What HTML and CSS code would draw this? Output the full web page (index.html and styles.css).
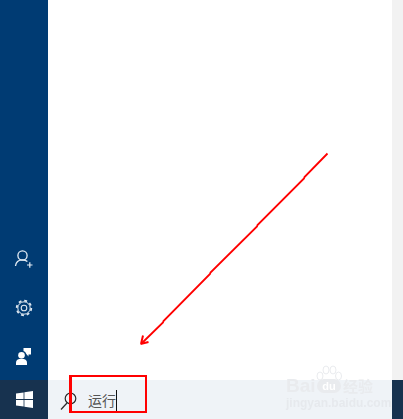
FILE: index.html
```html
<!DOCTYPE html>
<html lang="zh-CN">
<head>
  <meta charset="UTF-8">
  <meta name="viewport" content="width=device-width, initial-scale=1.0">
  <title>运行</title>
  <link rel="stylesheet" href="styles.css">
</head>
<body>
  <div class="screen">

    <!-- Start menu -->
    <div class="start-menu">
      <div class="rail">
        <svg class="rail-icon" width="20" height="20" viewBox="0 0 20 20" fill="none" stroke="#e6eef6" stroke-width="1.3">
          <circle cx="8.5" cy="6.5" r="4.6"/>
          <path d="M1.5 17c.4-4 3-6.2 7-6.2 2 0 3.700.6 4.900 1.700"/>
          <path d="M13 16h5.500M15.800 13.300v5.400" stroke-width="1.200"/>
        </svg>
        <svg class="rail-icon" width="18" height="18" viewBox="0 0 18 18" fill="none" stroke="#dfe8f1">
          <circle cx="9" cy="9" r="2.800" stroke-width="1.100"/>
          <circle cx="9" cy="9" r="6.200" stroke-width="1"/>
          <circle cx="9" cy="9" r="7.300" stroke-width="1.800" stroke-dasharray="2.900 2.830"/>
        </svg>
        <svg class="rail-icon" width="16" height="18" viewBox="0 0 16 18" fill="#fff">
          <circle cx="5.500" cy="8.200" r="3.300"/>
          <path d="M0 18v-2.500c0-2.200 1.800-3.700 5.500-3.700s5.500 1.500 5.500 3.700V18z"/>
          <path d="M7.500 1H15v6.500h-2.500v2l-2.200-2.500c-.5-1.600-1.600-2.500-2.800-3z"/>
        </svg>
      </div>
      <div class="menu-body"></div>
      <div class="menu-edge"></div>
    </div>

    <!-- Taskbar -->
    <div class="taskbar">
      <div class="start-btn">
        <svg width="17" height="17" viewBox="0 0 17 17" fill="#fff">
          <path d="M0 2.500 7.600 1.400v6.700H0z"/>
          <path d="M8.400 1.300 17 0v8.100H8.400z"/>
          <path d="M0 8.900h7.600v6.700L0 14.500z"/>
          <path d="M8.400 8.900H17V17l-8.600-1.300z"/>
        </svg>
      </div>
      <div class="search-box">
        <svg class="search-icon" width="17" height="18" viewBox="0 0 17 18" fill="none" stroke="#2b2b2b" stroke-width="1.200">
          <circle cx="10.500" cy="6.500" r="5.300"/>
          <path d="M7 11 1 17.500"/>
        </svg>
        <span class="search-text">运行</span>
        <span class="caret"></span>
      </div>
      <div class="show-desktop"></div>
    </div>

    <!-- Annotations on top of the screenshot -->
    <div class="mark-box"></div>
    <svg class="mark-arrow" width="403" height="419" viewBox="0 0 403 419" fill="none" stroke="#ff0000" stroke-width="1.800">
      <path d="M327.500 153.500 304.500 177 304 178.500 257.500 225 257 226.500 210.500 272.500 210 274 163.500 321 163 322.500 142 343"/>
      <path d="M140.500 344 148.500 342M141 344 143 335.500" stroke-width="2"/>
    </svg>

    <div class="watermark">
      <div class="wm-top">
        <span class="wm-bai">Bai</span>
        <span class="wm-du">du</span>
        <span class="wm-cn">经验</span>
      </div>
      <div class="wm-url">jingyan.baidu.com</div>
      <svg class="wm-paw" width="26" height="17" viewBox="0 0 26 17" fill="#fff" stroke="#e9ebee">
        <ellipse cx="4" cy="11" rx="3" ry="4"/>
        <ellipse cx="10" cy="5" rx="3" ry="4"/>
        <ellipse cx="17" cy="5" rx="3" ry="4"/>
        <ellipse cx="22.500" cy="11" rx="3" ry="4"/>
      </svg>
    </div>

  </div>
</body>
</html>
```

FILE: styles.css
```css
html, body {
  margin: 0;
  padding: 0;
  background-color: white;
}

.screen {
  position: relative;
  display: flex;
  flex-direction: column;
  width: 403px;
  height: 419px;
  overflow: hidden;
  font-family: "Liberation Sans", "Noto Sans CJK SC", sans-serif;
}

.start-menu {
  display: flex;
  height: 380px;
}

.rail {
  display: flex;
  flex-direction: column;
  align-items: center;
  justify-content: flex-end;
  gap: 30px;
  width: 48px;
  padding-bottom: 15px;
  box-sizing: border-box;
  background-color: #003b73;
}

.rail-icon {
  display: block;
}

.menu-body {
  flex: 1;
  background-color: white;
}

.menu-edge {
  width: 11px;
  background-color: #f2f2f2;
}

.taskbar {
  display: flex;
  height: 39px;
}

.start-btn {
  display: flex;
  align-items: center;
  justify-content: center;
  width: 48px;
  background-color: #17324f;
}

.search-box {
  display: flex;
  align-items: center;
  flex: 1;
  background-color: #eff3f7;
}

.search-icon {
  margin: 3px 0 0 12px;
}

.search-text {
  margin: 0 0 0 11px;
  font-family: "Noto Sans CJK SC", sans-serif;
  font-size: 14px;
  color: #555;
}

.caret {
  width: 1px;
  height: 21px;
  margin-top: 1px;
  background-color: #111;
}

.show-desktop {
  width: 11px;
  background-color: #17324f;
}

.mark-box {
  position: absolute;
  left: 69px;
  top: 375px;
  width: 73px;
  height: 34px;
  border: 2px solid #ff0000;
  border-left-width: 3px;
}

.mark-arrow {
  position: absolute;
  left: 0;
  top: 0;
}

.watermark {
  position: absolute;
  left: 286px;
  top: 365px;
  width: 92px;
  color: #e9ebee;
  filter: blur(0.4px);
}

.wm-top {
  display: flex;
  align-items: center;
  height: 30px;
  padding-top: 12px;
  box-sizing: border-box;
}

.wm-bai {
  width: 31px;
  font-size: 19px;
  font-weight: bold;
  line-height: 18px;
}

.wm-du {
  width: 24px;
  height: 14px;
  border-radius: 8px;
  background-color: #e9ebee;
  color: #fff;
  font-size: 11px;
  font-weight: bold;
  line-height: 14px;
  text-align: center;
}

.wm-cn {
  margin-left: 2px;
  font-family: "Noto Sans CJK SC", sans-serif;
  font-size: 15px;
  font-weight: bold;
  line-height: 18px;
}

.wm-url {
  margin-top: 2px;
  font-size: 12px;
  font-weight: bold;
  line-height: 13px;
  white-space: nowrap;
  color: #e6e9ed;
}

.wm-paw {
  position: absolute;
  left: 30px;
  top: 0;
}
```
